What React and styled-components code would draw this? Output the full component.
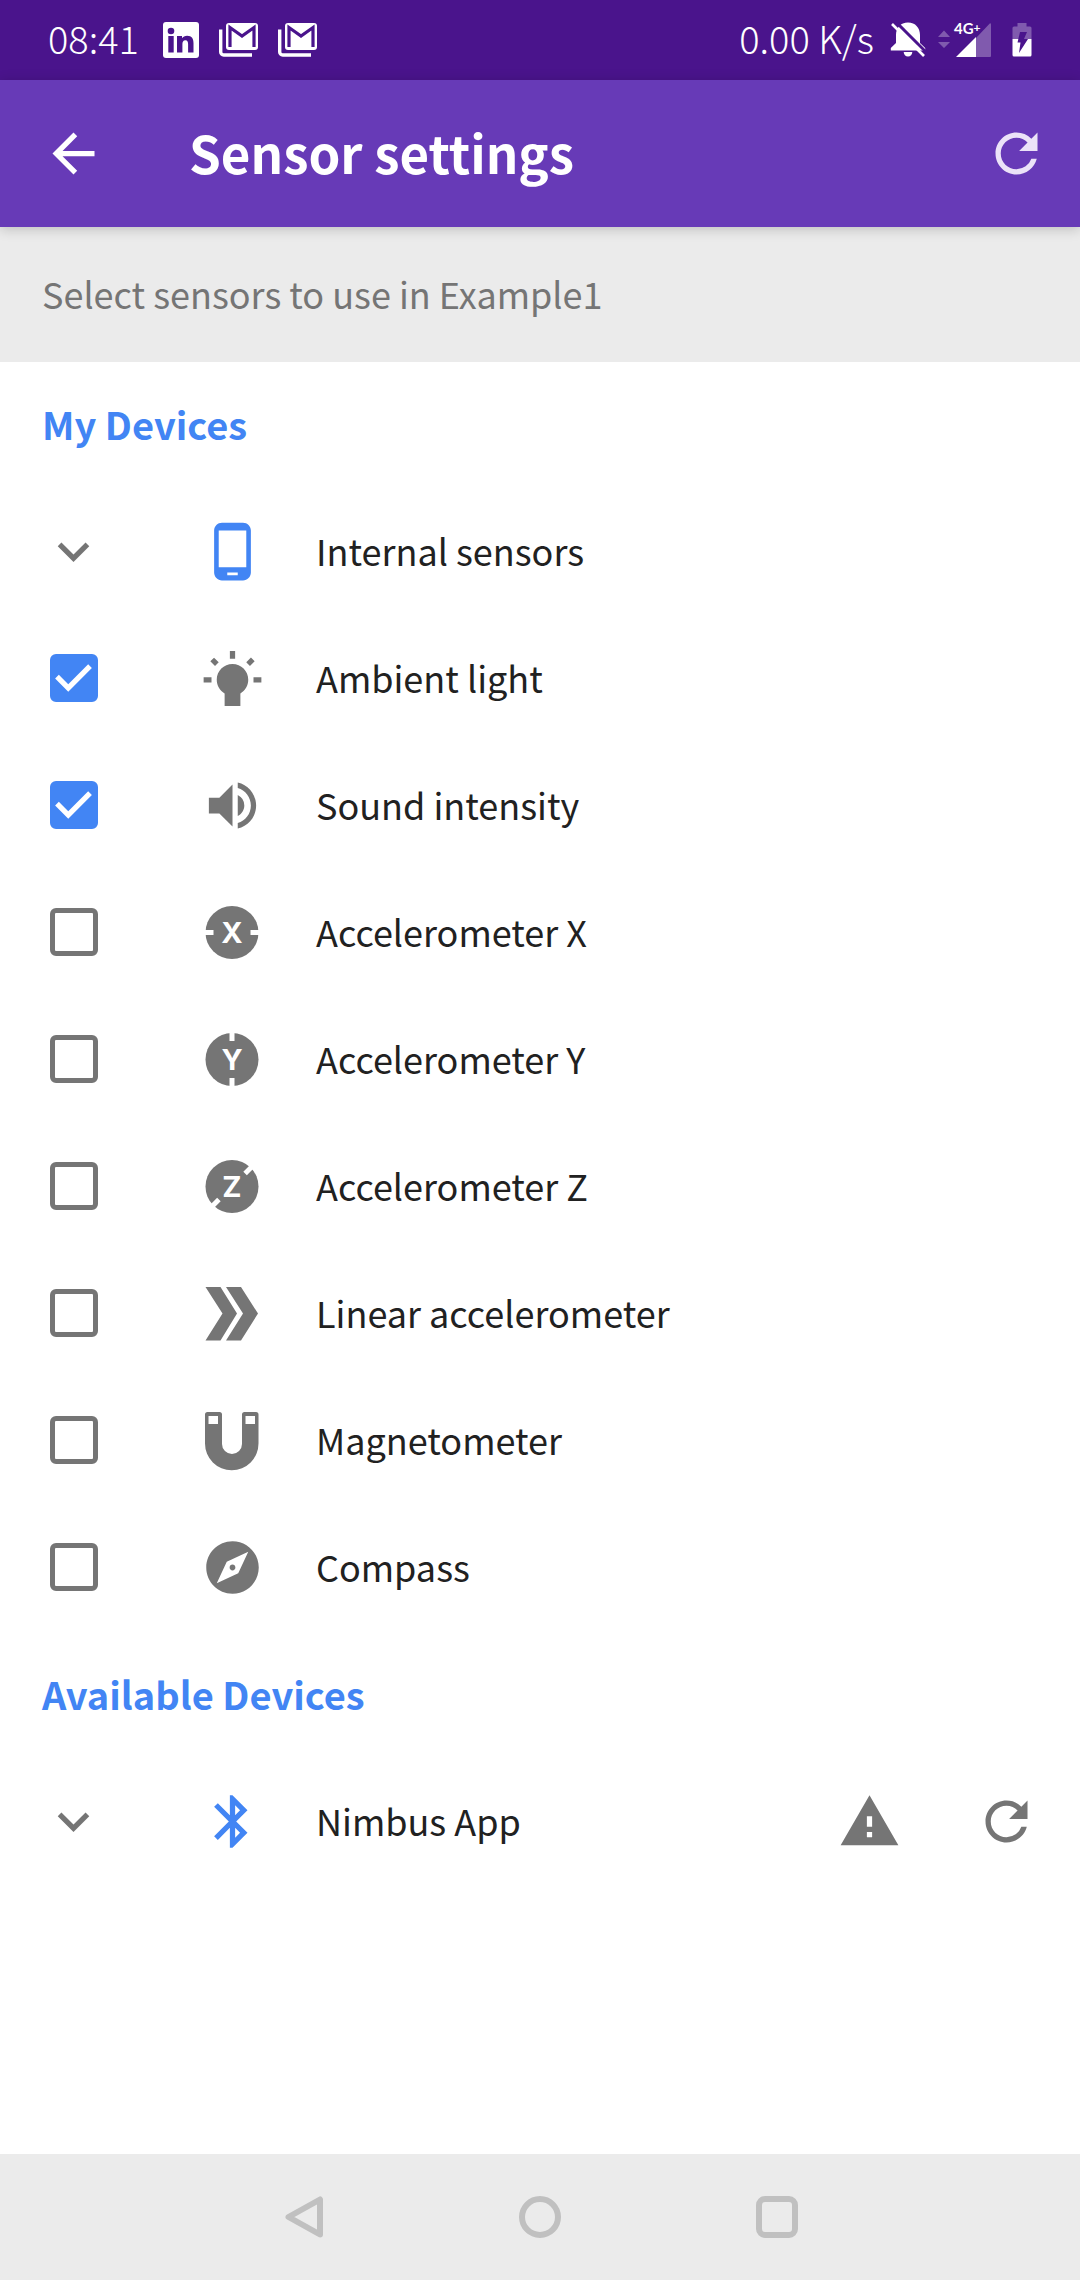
import React, { useState } from "react";
import styled, { createGlobalStyle } from "styled-components";
import {
  MdArrowBack,
  MdRefresh,
  MdExpandMore,
  MdPhoneAndroid,
  MdVolumeUp,
  MdExplore,
  MdBluetooth,
  MdWarning,
} from "react-icons/md";

const color = {
  statusBar: "#4a148c",
  appBar: "#673ab7",
  accent: "#4285f4",
  icon: "#757575",
  text: "#212121",
  surface: "#ebebeb",
  nav: "#c0c0c0",
};

const GlobalStyle = createGlobalStyle`
  *, *::before, *::after { box-sizing: border-box; }
  body {
    margin: 0;
    background: #fff;
    color: ${color.text};
    font-family: "Noto Sans CJK SC", "Open Sans", sans-serif;
    font-size: 36px;
    line-height: 48px;
  }
`;

const Screen = styled.div`
  min-height: 100vh;
  display: flex;
  flex-direction: column;
`;

const StatusBar = styled.div`
  height: 80px;
  padding: 0 48px;
  display: flex;
  align-items: center;
  justify-content: space-between;
  background: ${color.statusBar};
  color: #fff;
`;

const StatusGroup = styled.div`
  display: flex;
  align-items: center;
  gap: ${(p) => p.$gap}px;

  svg { display: block; }
`;

const StatusText = styled.span`
  padding: 0 4px 4px 0;
  font-size: 38px;
  font-weight: 300;
`;

const AppBar = styled.header`
  height: 147px;
  padding: 0 32px 0 42px;
  display: flex;
  align-items: center;
  background: ${color.appBar};
  color: #fff;
  box-shadow: 0 2px 12px rgba(0, 0, 0, 0.2);
  z-index: 1;
`;

const Title = styled.h1`
  flex: 1;
  margin: 0;
  padding: 0 0 4px 84px;
  font-size: 51px;
  line-height: 64px;
  font-weight: 700;
`;

const IconButton = styled.button`
  display: grid;
  place-items: center;
  padding: 0;
  border: 0;
  background: none;
  color: ${(p) => p.$tone || "inherit"};
  font-size: 63px;

  svg { display: block; }
`;

const Banner = styled.p`
  margin: 0;
  height: 135px;
  padding: 0 42px 4px;
  display: flex;
  align-items: center;
  background: ${color.surface};
  color: ${color.icon};
`;

const Content = styled.main`
  flex: 1;
`;

const SectionTitle = styled.h2`
  margin: 0;
  height: 127px;
  padding: 0 42px 4px;
  display: flex;
  align-items: center;
  color: ${color.accent};
  font-size: 38px;
  font-weight: 700;
`;

const List = styled.ul`
  margin: 0;
  padding: 0;
  list-style: none;
`;

const Row = styled.li`
  height: 127px;
  padding: 0 42px 3px;
  display: flex;
  align-items: center;
`;

const RowLabel = styled.label`
  flex: 1;
  display: flex;
  align-items: center;
`;

const CheckSlot = styled.span`
  width: 63px;
  height: 63px;
  display: grid;
  place-items: center;

  > * { grid-area: 1 / 1; }
  svg { display: block; pointer-events: none; }
`;

const CheckInput = styled.input`
  appearance: none;
  width: 48px;
  height: 48px;
  margin: 0;
  border: 5px solid ${color.icon};
  border-radius: 6px;

  &:checked {
    border-color: ${color.accent};
    background: ${color.accent};
  }
`;

const RowIcon = styled.span`
  margin: 0 52px 0 96px;
  color: ${(p) => (p.$accent ? color.accent : color.icon)};
  font-size: 63px;

  svg { display: block; width: 63px; height: 63px; }
`;

const RowText = styled.span`
  flex: 1;
  padding-bottom: 2px;
`;

const Actions = styled.div`
  display: flex;
  gap: 74px;
  color: ${color.icon};
  font-size: 63px;

  svg { display: block; }
`;

const NavBar = styled.nav`
  height: 126px;
  display: flex;
  justify-content: center;
  align-items: center;
  background: ${color.surface};
`;

const NavButton = styled.button`
  flex: 0 1 237px;
  display: grid;
  place-items: center;
  padding: 0;
  border: 0;
  background: none;
  color: ${color.nav};
`;

const LinkedInIcon = () => (
  <svg width="36" height="36" viewBox="0 0 36 36" aria-hidden="true">
    <rect width="36" height="36" rx="3" fill="#fff" />
    <g fill={color.statusBar}>
      <circle cx="8" cy="9" r="3.3" />
      <rect x="5.3" y="14" width="5.4" height="16.5" />
      <path d="M14 14h5v2.3c1-1.7 2.900-2.600 5.100-2.600 4.900 0 6.400 3.100 6.400 7.600v9.200h-5.400v-8.300c0-2.300-.5-4-2.700-4-2.300 0-3 1.700-3 4v8.300H14z" />
    </g>
  </svg>
);

const MailStackIcon = () => (
  <svg width="39" height="34" viewBox="0 0 39 34" aria-hidden="true">
    <path d="M1.700 6.500V29a3 3 0 0 0 3 3H33" fill="none" stroke="#fff" strokeWidth="3.400" />
    <rect x="7" y="0" width="32" height="27" rx="3" fill="#fff" />
    <path d="M11 24V4.500L23 13 35 4.500V24" fill="none" stroke={color.statusBar} strokeWidth="3.200" />
  </svg>
);

const BellOffIcon = () => (
  <svg width="36" height="36" viewBox="0 0 36 36" aria-hidden="true">
    <path d="M18 .5C10.500.5 6 6 6 13v8L.8 26v2.500h34.400V26L30 21v-8C30 6 25.500.5 18 .5z" fill="#fff" />
    <path d="M13.700 30h8.600c0 2.700-1.900 4.500-4.300 4.500s-4.300-1.800-4.300-4.500z" fill="#fff" />
    <path d="M4-2l34 34" stroke={color.statusBar} strokeWidth="3" />
    <path d="M2 2l32 32" stroke="#fff" strokeWidth="2.600" />
  </svg>
);

const SignalIcon = () => (
  <svg width="54" height="48" viewBox="0 -6 54 48" aria-hidden="true">
    <path d="M0 15l6-6.500 6 6.500zM0 20h12l-6 6z" fill="#fff" opacity=".3" />
    <path d="M38 16L52 1.200a1 1 0 0 1 1 1V34a1 1 0 0 1-1 1H38z" fill="#fff" opacity=".3" />
    <path d="M38 15v20H18z" fill="#fff" />
    <text x="16" y="12" fontFamily="Lato, sans-serif" fontSize="15" fontWeight="700" fill="#fff">
      4G
      <tspan fontSize="12" dy="-2">+</tspan>
    </text>
  </svg>
);

const BatteryIcon = () => (
  <svg width="20" height="34" viewBox="0 0 20 34" aria-hidden="true">
    <path d="M5.500 0h9v3.500H18a1.500 1.500 0 0 1 1.500 1.500v11H.5V5A1.500 1.500 0 0 1 2 3.500h3.500z" fill="#fff" opacity=".3" />
    <path d="M.5 16h19v16a1.500 1.500 0 0 1-1.500 1.500H2A1.500 1.500 0 0 1 .5 32z" fill="#fff" />
    <path d="M8 9h7l-3 7h4L7 30l1.500-10.500H5.500z" fill={color.statusBar} />
  </svg>
);

const BulbIcon = () => (
  <svg viewBox="0 0 24 24" fill="currentColor" aria-hidden="true">
    <path
      transform="matrix(1 0 0 -1 0 24)"
      d="M3.550 18.540l1.410 1.410 1.790-1.800-1.410-1.410-1.790 1.800zM11 22.450h2V19.500h-2v2.950zM4 10.500H1v2h3v-2zm11-4.190V1.500H9v4.810C7.210 7.350 6 9.280 6 11.500c0 3.310 2.690 6 6 6s6-2.690 6-6c0-2.220-1.210-4.150-3-5.190zm5 4.190v2h3v-2h-3zm-2.760 7.660l1.790 1.800 1.410-1.410-1.800-1.790-1.400 1.400z"
    />
  </svg>
);

const AxisIcon = ({ axis, angle }) => (
  <svg viewBox="0 0 63 63" aria-hidden="true">
    <circle cx="31" cy="31.500" r="26.500" fill="currentColor" />
    <path
      d="M3 31.500h9.500M49.500 31.500h9.500"
      stroke="#fff"
      strokeWidth="5"
      transform={`rotate(${angle} 31 31.500)`}
    />
    <text x="31" y="42" textAnchor="middle" fontFamily="Inter, sans-serif" fontSize="29" fontWeight="700" fill="#fff">
      {axis}
    </text>
  </svg>
);

const DoubleChevronIcon = () => (
  <svg viewBox="0 0 63 63" fill="currentColor" aria-hidden="true">
    <path d="M4.500 5h15l16.500 26.500L19.500 58.500h-15L21.500 31.500zM25 5h15l17 26.500L40 58.500H25L42 31.500z" />
  </svg>
);

const MagnetIcon = () => (
  <svg viewBox="0 0 63 63" fill="currentColor" aria-hidden="true">
    <path
      fillRule="evenodd"
      d="M6.500 3h12a2.500 2.500 0 0 1 2.500 2.500V35a10 10 0 0 0 20 0V5.500A2.500 2.500 0 0 1 43.500 3H55A2.500 2.500 0 0 1 57.500 5.500V34.500a26.750 26.750 0 0 1-53.500 0V5.500A2.500 2.500 0 0 1 6.500 3zM7.500 7v8H17v-8zM44.500 7v8H54v-8z"
    />
  </svg>
);

const sensors = [
  { id: "light", name: "Ambient light", icon: <BulbIcon />, on: true },
  { id: "sound", name: "Sound intensity", icon: <MdVolumeUp />, on: true },
  { id: "acc-x", name: "Accelerometer X", icon: <AxisIcon axis="X" angle={0} /> },
  { id: "acc-y", name: "Accelerometer Y", icon: <AxisIcon axis="Y" angle={90} /> },
  { id: "acc-z", name: "Accelerometer Z", icon: <AxisIcon axis="Z" angle={-45} /> },
  { id: "linear", name: "Linear accelerometer", icon: <DoubleChevronIcon /> },
  { id: "magnet", name: "Magnetometer", icon: <MagnetIcon /> },
  { id: "compass", name: "Compass", icon: <MdExplore /> },
];

function SensorRow({ sensor }) {
  const [checked, setChecked] = useState(Boolean(sensor.on));
  return (
    <Row>
      <RowLabel htmlFor={sensor.id}>
        <CheckSlot>
          <CheckInput
            id={sensor.id}
            type="checkbox"
            checked={checked}
            onChange={(e) => setChecked(e.target.checked)}
          />
          {checked && (
            <svg width="63" height="63" viewBox="0 0 24 24" aria-hidden="true">
              <path d="M10 17l-5-5 1.410-1.410L10 14.170l7.590-7.590L19 8z" fill="#fff" />
            </svg>
          )}
        </CheckSlot>
        <RowIcon>{sensor.icon}</RowIcon>
        <RowText>{sensor.name}</RowText>
      </RowLabel>
    </Row>
  );
}

function DeviceRow({ name, icon, children }) {
  return (
    <Row>
      <IconButton type="button" $tone={color.icon} aria-label={`Expand ${name}`}>
        <MdExpandMore />
      </IconButton>
      <RowIcon $accent>{icon}</RowIcon>
      <RowText>{name}</RowText>
      {children}
    </Row>
  );
}

export default function App() {
  return (
    <>
      <GlobalStyle />
      <Screen>
        <StatusBar>
          <StatusGroup $gap={20}>
            <StatusText>08:41</StatusText>
            <LinkedInIcon />
            <MailStackIcon />
            <MailStackIcon />
          </StatusGroup>
          <StatusGroup $gap={20}>
            <StatusGroup $gap={12}>
              <StatusText>0.00 K/s</StatusText>
              <BellOffIcon />
              <SignalIcon />
            </StatusGroup>
            <BatteryIcon />
          </StatusGroup>
        </StatusBar>
        <AppBar>
          <IconButton type="button" aria-label="Back">
            <MdArrowBack />
          </IconButton>
          <Title>Sensor settings</Title>
          <IconButton type="button" $tone="#ebe2f8" aria-label="Refresh">
            <MdRefresh />
          </IconButton>
        </AppBar>
        <Banner>Select sensors to use in Example1</Banner>
        <Content>
          <SectionTitle>My Devices</SectionTitle>
          <List>
            <DeviceRow name="Internal sensors" icon={<MdPhoneAndroid />} />
            {sensors.map((s) => (
              <SensorRow key={s.id} sensor={s} />
            ))}
          </List>
          <SectionTitle>Available Devices</SectionTitle>
          <List>
            <DeviceRow name="Nimbus App" icon={<MdBluetooth />}>
              <Actions>
                <MdWarning aria-hidden="true" />
                <IconButton type="button" aria-label="Reconnect Nimbus App">
                  <MdRefresh />
                </IconButton>
              </Actions>
            </DeviceRow>
          </List>
        </Content>
        <NavBar>
          <NavButton type="button" aria-label="Back">
            <svg width="42" height="42" viewBox="0 0 42 42" fill="none" stroke="currentColor" strokeWidth="6" strokeLinejoin="round">
              <path d="M38 3.500v35L6.500 21z" />
            </svg>
          </NavButton>
          <NavButton type="button" aria-label="Home">
            <svg width="42" height="42" viewBox="0 0 42 42" fill="none" stroke="currentColor" strokeWidth="6">
              <circle cx="21" cy="21" r="18" />
            </svg>
          </NavButton>
          <NavButton type="button" aria-label="Recent apps">
            <svg width="42" height="42" viewBox="0 0 42 42" fill="none" stroke="currentColor" strokeWidth="6">
              <rect x="3" y="3" width="36" height="36" rx="6" />
            </svg>
          </NavButton>
        </NavBar>
      </Screen>
    </>
  );
}
